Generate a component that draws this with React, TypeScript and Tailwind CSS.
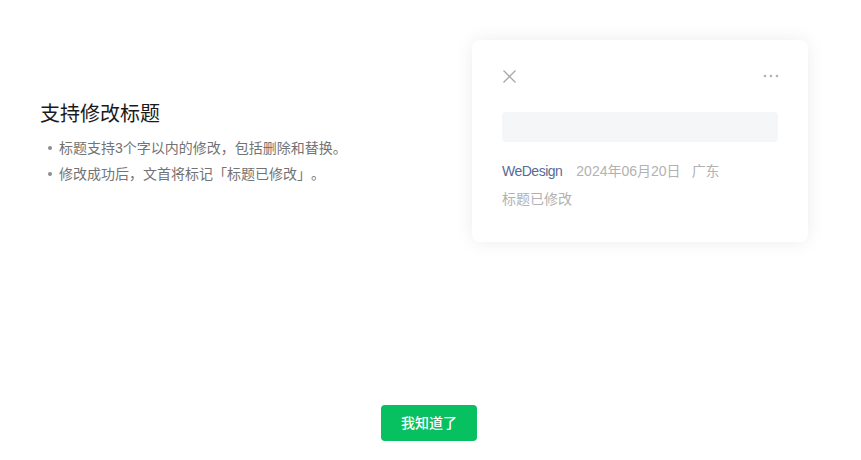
export default function App() {
  return (
    <div
      className="w-[861px] h-[460px] bg-white flex flex-col [text-spacing-trim:space-all]"
      style={{ fontFamily: '"Liberation Sans", "Noto Sans CJK SC", sans-serif' }}
    >
      <div className="flex flex-1 pl-10 pr-[53px] pt-10">
        {/* left: explanation */}
        <div className="flex-1 pt-[60px]">
          <h2 className="text-[20px] leading-[28px] text-[#1a1a1a] font-normal">支持修改标题</h2>
          <ul className="mt-[7px] text-[14px] leading-[26px] text-[#737373]">
            <li className="flex items-center">
              <span className="ml-2 mr-[7px] w-1 h-1 rounded-full bg-[#8c8c8c]" />
              标题支持3个字以内的修改，包括删除和替换。
            </li>
            <li className="flex items-center">
              <span className="ml-2 mr-[7px] w-1 h-1 rounded-full bg-[#8c8c8c]" />
              修改成功后，文首将标记「标题已修改」。
            </li>
          </ul>
        </div>

        {/* right: preview card */}
        <div className="w-[336px] h-[202px] rounded-lg bg-white shadow-[0_0_18px_rgba(0,0,0,0.08)] px-[30px] pt-[29px]">
          <div className="flex items-center justify-between h-[14px]">
            <svg width="15" height="15" viewBox="0 0 15 15">
              <path d="M1.5 1.5 L13.5 13.5 M13.5 1.5 L1.5 13.5" stroke="#a8a8a8" strokeWidth="1.3" />
            </svg>
            <svg width="16" height="4" viewBox="0 0 16 4" className="-mr-[1px]">
              <circle cx="2" cy="2" r="1.3" fill="#b2b2b2" />
              <circle cx="8" cy="2" r="1.3" fill="#b2b2b2" />
              <circle cx="14" cy="2" r="1.3" fill="#b2b2b2" />
            </svg>
          </div>
          <div className="mt-[29px] h-[30px] rounded bg-[#f5f6f8]" />
          <div className="mt-[19px] flex text-[14px] leading-[20px]">
            <span className="text-[#576b95] tracking-[-0.5px]">WeDesign</span>
            <span className="ml-[14px] text-[#b2b2b2]">2024年06月20日</span>
            <span className="ml-[11px] text-[#b2b2b2]">广东</span>
          </div>
          <div className="mt-2 text-[14px] leading-[20px] text-[#b2b2b2]">标题已修改</div>
        </div>
      </div>

      <div className="flex justify-center pb-[19px] pr-[3px]">
        <button className="w-24 h-9 rounded bg-[#07c160] text-white text-[14px] font-medium">我知道了</button>
      </div>
    </div>
  );
}
